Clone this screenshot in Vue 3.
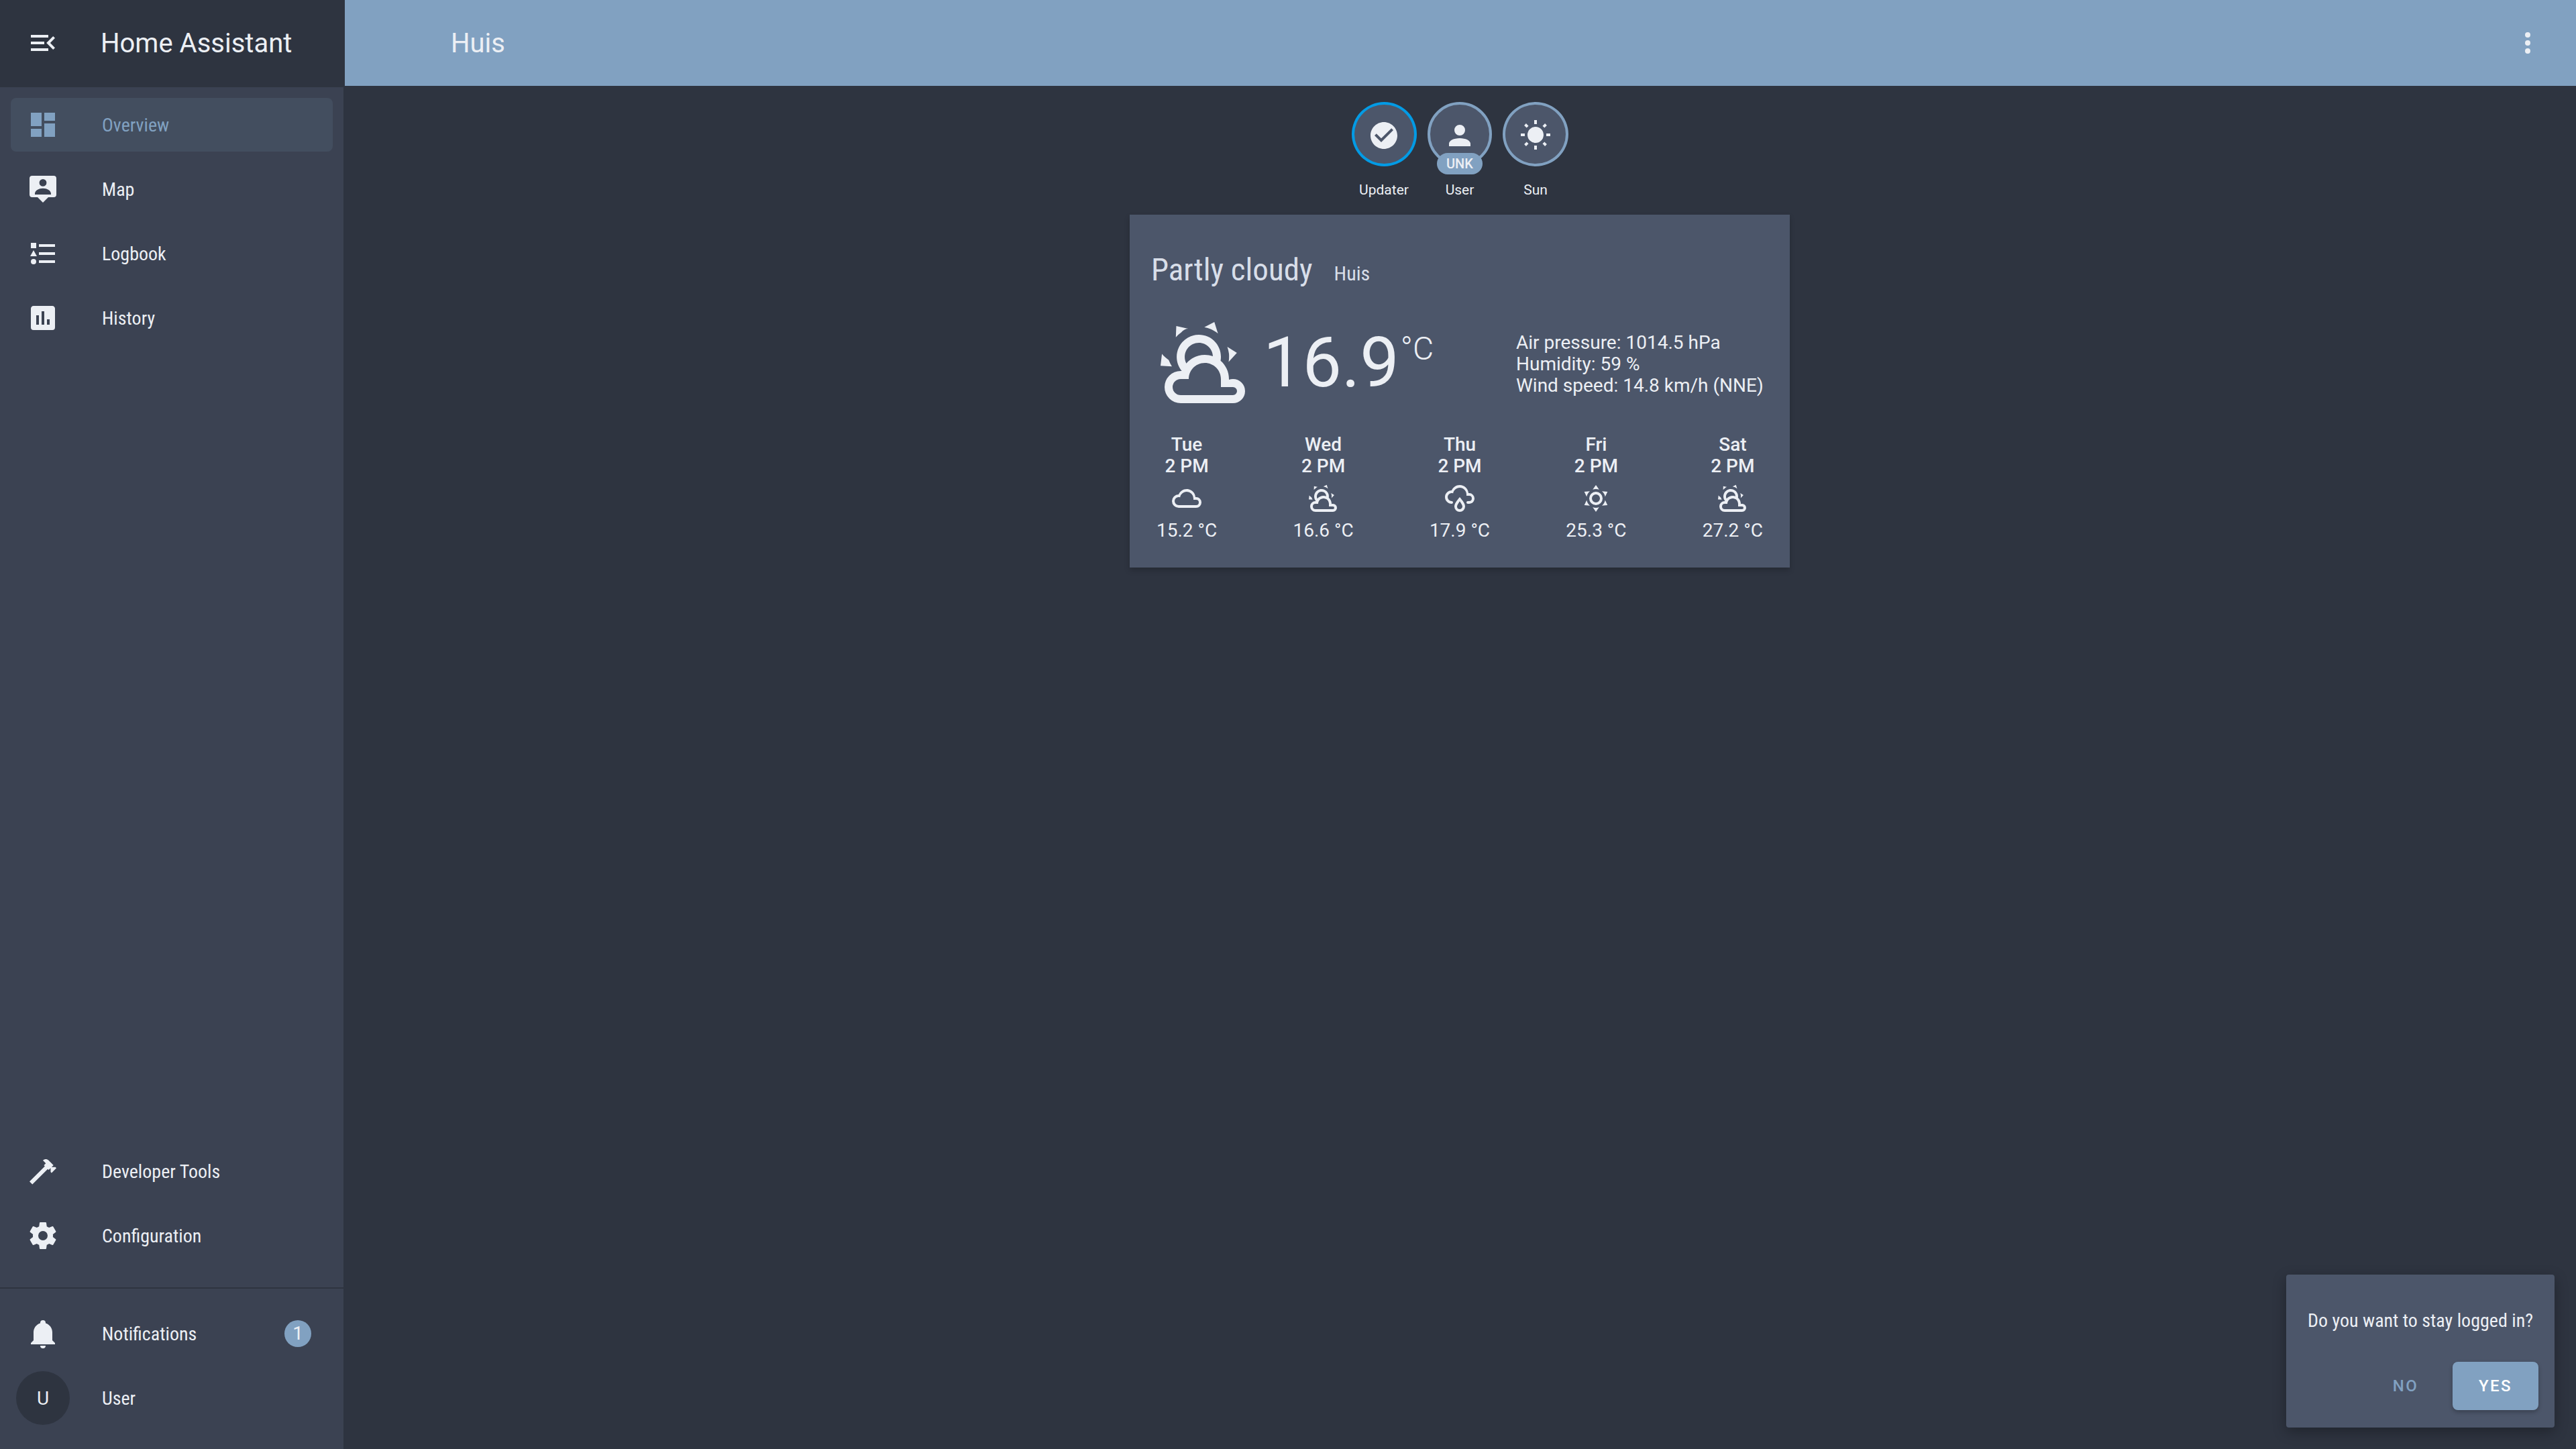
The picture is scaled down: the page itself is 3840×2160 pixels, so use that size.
<script setup>
const topNav = [
  { label: 'Overview', icon: 'M13,3V9H21V3M13,21H21V11H13M3,21H11V15H3M3,13H11V3H3V13Z', active: true },
  { label: 'Map', icon: 'M4,2H20A2,2 0 0,1 22,4V16A2,2 0 0,1 20,18H16L12,22L8,18H4A2,2 0 0,1 2,16V4A2,2 0 0,1 4,2M12,4.5A2.7,2.7 0 0,0 9.3,7.2A2.7,2.7 0 0,0 12,9.9A2.7,2.7 0 0,0 14.7,7.2A2.7,2.7 0 0,0 12,4.5M18,15.4C18,13 15,11.4 12,11.4C9,11.4 6,13 6,15.4V16H18Z' },
  { label: 'Logbook', icon: 'M5,9.5L7.5,14H2.5L5,9.5M3,4H7V8H3V4M5,20A2,2 0 0,0 7,18A2,2 0 0,0 5,16A2,2 0 0,0 3,18A2,2 0 0,0 5,20M9,5V7H21V5H9M9,19H21V17H9V19M9,13H21V11H9V13Z' },
  { label: 'History', icon: 'M19,3H5C3.89,3 3,3.89 3,5V19A2,2 0 0,0 5,21H19A2,2 0 0,0 21,19V5C21,3.89 20.1,3 19,3M9,17H7V10H9V17M13,17H11V7H13V17M17,17H15V13H17V17Z' }
]
const toolNav = [
  { label: 'Developer Tools', icon: 'M2 19.63L13.43 8.2L12.72 7.5L14.14 6.07L12 3.89C13.2 2.7 15.09 2.7 16.27 3.89L19.87 7.5L18.45 8.91H21.29L22 9.62L18.45 13.21L17.74 12.5V9.62L16.27 11.04L15.56 10.33L4.13 21.76L2 19.63Z' },
  { label: 'Configuration', icon: 'M12,15.5A3.5,3.5 0 0,1 8.5,12A3.5,3.5 0 0,1 12,8.5A3.5,3.5 0 0,1 15.5,12A3.5,3.5 0 0,1 12,15.5M19.43,12.97C19.47,12.65 19.5,12.33 19.5,12C19.5,11.67 19.47,11.34 19.43,11L21.54,9.37C21.73,9.22 21.78,8.95 21.66,8.73L19.66,5.27C19.54,5.05 19.27,4.96 19.05,5.05L16.56,6.05C16.04,5.66 15.5,5.32 14.87,5.07L14.5,2.42C14.46,2.18 14.25,2 14,2H10C9.75,2 9.54,2.18 9.5,2.42L9.13,5.07C8.5,5.32 7.96,5.66 7.44,6.05L4.95,5.05C4.73,4.96 4.46,5.05 4.34,5.27L2.34,8.73C2.21,8.95 2.27,9.22 2.46,9.37L4.57,11C4.53,11.34 4.5,11.67 4.5,12C4.5,12.33 4.53,12.65 4.57,12.97L2.46,14.63C2.27,14.78 2.21,15.05 2.34,15.27L4.34,18.73C4.46,18.95 4.73,19.03 4.95,18.95L7.44,17.94C7.96,18.34 8.5,18.68 9.13,18.93L9.5,21.58C9.54,21.82 9.75,22 10,22H14C14.25,22 14.46,21.82 14.5,21.58L14.87,18.93C15.5,18.67 16.04,18.34 16.56,17.94L19.05,18.95C19.27,19.03 19.54,18.95 19.66,18.73L21.66,15.27C21.78,15.05 21.73,14.78 21.54,14.63L19.43,12.97Z' }
]
const bell = 'M21,19V20H3V19L5,17V11C5,7.9 7.03,5.17 10,4.29C10,4.19 10,4.1 10,4A2,2 0 0,1 12,2A2,2 0 0,1 14,4C14,4.1 14,4.19 14,4.29C16.97,5.17 19,7.9 19,11V17L21,19M14,21A2,2 0 0,1 12,23A2,2 0 0,1 10,21'
const menuOpen = 'M21,15.61L19.59,17L14.58,12L19.59,7L21,8.39L17.44,12L21,15.61M3,6H16V8H3V6M3,13V11H13V13H3M3,18V16H16V18H3Z'
const dots = 'M12,16A2,2 0 0,1 14,18A2,2 0 0,1 12,20A2,2 0 0,1 10,18A2,2 0 0,1 12,16M12,10A2,2 0 0,1 14,12A2,2 0 0,1 12,14A2,2 0 0,1 10,12A2,2 0 0,1 12,10M12,4A2,2 0 0,1 14,6A2,2 0 0,1 12,8A2,2 0 0,1 10,6A2,2 0 0,1 12,4Z'

const partly = 'M12.74,5.47C15.1,6.5 16.35,9.03 15.92,11.46C17.19,12.56 18,14.19 18,16V16.17C18.31,16.06 18.65,16 19,16A3,3 0 0,1 22,19A3,3 0 0,1 19,22H6A4,4 0 0,1 2,18A4,4 0 0,1 6,14H6.27C5,12.45 4.6,10.24 5.5,8.26C6.72,5.5 9.97,4.24 12.74,5.47M11.93,7.3C10.16,6.5 8.09,7.31 7.31,9.07C6.85,10.09 6.93,11.22 7.41,12.13C8.5,10.83 10.16,10 12,10C12.7,10 13.38,10.12 14,10.34C13.94,9.06 13.18,7.86 11.93,7.3M13.55,3.64C13,3.4 12.45,3.23 11.88,3.12L14.37,1.82L15.27,4.71C14.76,4.29 14.19,3.93 13.55,3.64M6.09,4.44C5.6,4.79 5.17,5.19 4.8,5.63L4.91,2.82L7.87,3.5C7.25,3.5 6.65,3.81 6.09,4.44M18,9.71C17.91,9.12 17.78,8.55 17.59,8L19.97,9.5L17.92,11.73C18.03,11.08 18.05,10.4 18,9.71M3.04,11.3C3.24,11.85 3.5,12.38 3.83,12.87L1,12.7L1.35,9.74C1.77,10.28 2.4,10.8 3.04,11.3M19,18H16V16C16,13.79 14.21,12 12,12C9.79,12 8,13.79 8,16H6A2,2 0 0,0 4,18A2,2 0 0,0 6,20H19A1,1 0 0,0 20,19A1,1 0 0,0 19,18Z'
const cloudy = 'M6,19A5,5 0 0,1 1,14A5,5 0 0,1 6,9C7,6.65 9.3,5 12,5C15.43,5 18.24,7.66 18.5,11.03L19,11A4,4 0 0,1 23,15A4,4 0 0,1 19,19H6M19,13H17V12A5,5 0 0,0 12,7C9.5,7 7.45,8.82 7.06,11.19C6.73,11.07 6.37,11 6,11A3,3 0 0,0 3,14A3,3 0 0,0 6,17H19A2,2 0 0,0 21,15A2,2 0 0,0 19,13Z'
const rainy = 'M6,14.03A1,1 0 0,1 7,15.03C7,15.58 6.55,16.03 6,16.03C3.24,16.03 1,13.79 1,11.03C1,8.27 3.24,6.03 6,6.03C7,3.68 9.3,2.03 12,2.03C15.43,2.03 18.24,4.69 18.5,8.06L19,8.03A4,4 0 0,1 23,12.03C23,14.23 21.21,16.03 19,16.03H18C17.45,16.03 17,15.58 17,15.03C17,14.47 17.45,14.03 18,14.03H19A2,2 0 0,0 21,12.03A2,2 0 0,0 19,10.03H17V9.03C17,6.27 14.76,4.03 12,4.03C9.5,4.03 7.45,5.86 7.06,8.21C6.73,8.09 6.37,8.03 6,8.03A3,3 0 0,0 3,11.03A3,3 0 0,0 6,14.03M12,14.15C12.18,14.39 12.37,14.66 12.56,14.94C13,15.56 14,17.03 14,18C14,19.11 13.1,20 12,20A2,2 0 0,1 10,18C10,17.03 11,15.56 11.44,14.94C11.63,14.66 11.82,14.39 12,14.15M12,11.03L11.5,11.59C11.5,11.59 10.65,12.55 9.79,13.81C8.93,15.06 8,16.56 8,18A4,4 0 0,0 12,22A4,4 0 0,0 16,18C16,16.56 15.07,15.06 14.21,13.81C13.35,12.55 12.5,11.59 12.5,11.59'
const sunny = 'M12,7A5,5 0 0,1 17,12A5,5 0 0,1 12,17A5,5 0 0,1 7,12A5,5 0 0,1 12,7M12,9A3,3 0 0,0 9,12A3,3 0 0,0 12,15A3,3 0 0,0 15,12A3,3 0 0,0 12,9M12,2L14.39,5.42C13.65,5.15 12.84,5 12,5C11.16,5 10.35,5.15 9.61,5.42L12,2M3.34,7L7.5,6.65C6.9,7.16 6.36,7.78 5.94,8.5C5.5,9.24 5.25,10 5.11,10.79L3.34,7M3.36,17L5.12,13.23C5.26,14 5.53,14.78 5.95,15.5C6.37,16.24 6.91,16.86 7.5,17.37L3.36,17M20.65,7L18.88,10.79C18.74,10 18.47,9.23 18.05,8.5C17.63,7.78 17.1,7.15 16.5,6.64L20.65,7M20.64,17L16.5,17.36C17.09,16.85 17.62,16.22 18.04,15.5C18.46,14.77 18.73,14 18.87,13.21L20.64,17M12,22L9.59,18.56C10.33,18.83 11.14,19 12,19C12.82,19 13.63,18.83 14.37,18.56L12,22Z'

const badges = [
  { label: 'Updater', on: true, width: 97, icon: 'M12 2C6.5 2 2 6.5 2 12S6.5 22 12 22 22 17.5 22 12 17.5 2 12 2M10 17L5 12L6.41 10.59L10 14.17L17.59 6.58L19 8L10 17Z' },
  { label: 'User', tag: 'UNK', width: 96, icon: 'M12,4A4,4 0 0,1 16,8A4,4 0 0,1 12,12A4,4 0 0,1 8,8A4,4 0 0,1 12,4M12,14C16.42,14 20,15.79 20,18V20H4V18C4,15.79 7.58,14 12,14Z' },
  { label: 'Sun', width: 98, icon: 'M3.55,18.54L4.96,19.95L6.76,18.16L5.34,16.74M11,22.45C11.32,22.45 13,22.45 13,22.45V19.5H11M12,5.5A6,6 0 0,0 6,11.5A6,6 0 0,0 12,17.5A6,6 0 0,0 18,11.5C18,8.18 15.31,5.5 12,5.5M20,12.5H23V10.5H20M17.24,18.16L19.04,19.95L20.45,18.54L18.66,16.74M20.45,4.46L19.04,3.05L17.24,4.84L18.66,6.26M13,0.55H11V3.5H13M4,10.5H1V12.5H4M6.76,4.84L4.96,3.05L3.55,4.46L5.34,6.26L6.76,4.84Z' }
]
const forecast = [
  { day: 'Tue', icon: cloudy, temp: '15.2 °C' },
  { day: 'Wed', icon: partly, temp: '16.6 °C' },
  { day: 'Thu', icon: rainy, temp: '17.9 °C' },
  { day: 'Fri', icon: sunny, temp: '25.3 °C' },
  { day: 'Sat', icon: partly, temp: '27.2 °C' }
]
</script>

<template>
  <div class="app">
    <aside class="sidebar">
      <div class="brand">
        <svg class="icon" viewBox="0 0 24 24"><path :d="menuOpen" /></svg>
        <span class="brand-title">Home Assistant</span>
      </div>
      <nav class="nav top">
        <a v-for="n in topNav" :key="n.label" class="item" :class="{ active: n.active }">
          <svg class="icon" viewBox="0 0 24 24"><path :d="n.icon" fill-rule="evenodd" /></svg>
          <span class="item-label">{{ n.label }}</span>
        </a>
      </nav>
      <nav class="nav tools">
        <a v-for="n in toolNav" :key="n.label" class="item">
          <svg class="icon" viewBox="0 0 24 24"><path :d="n.icon" /></svg>
          <span class="item-label">{{ n.label }}</span>
        </a>
      </nav>
      <div class="divider"></div>
      <nav class="nav bottom">
        <a class="item">
          <svg class="icon" viewBox="0 0 24 24"><path :d="bell" /></svg>
          <span class="item-label">Notifications</span>
          <span class="count">1</span>
        </a>
        <a class="item user">
          <span class="avatar">U</span>
          <span class="item-label">User</span>
        </a>
      </nav>
    </aside>

    <main class="main">
      <header class="topbar">
        <span class="view-title">Huis</span>
        <svg class="icon" viewBox="0 0 24 24"><path :d="dots" /></svg>
      </header>
      <div class="content">
        <div class="badges">
          <div v-for="b in badges" :key="b.label" class="badge">
            <div class="ring" :class="{ on: b.on }" :style="{ width: b.width + 'px' }">
              <svg class="icon" viewBox="0 0 24 24"><path :d="b.icon" /></svg>
              <span v-if="b.tag" class="tag">{{ b.tag }}</span>
            </div>
            <span class="badge-label">{{ b.label }}</span>
          </div>
        </div>
        <section class="card">
          <div class="card-head">
            <span class="state">Partly cloudy</span>
            <span class="place">Huis</span>
          </div>
          <div class="now">
            <svg class="now-icon" viewBox="0 0 24 24"><path :d="partly" /></svg>
            <div class="temp">16.9<span class="unit">°C</span></div>
            <div class="attrs">
              <div>Air pressure: 1014.5 hPa</div>
              <div>Humidity: 59 %</div>
              <div>Wind speed: 14.8 km/h (NNE)</div>
            </div>
          </div>
          <div class="forecast">
            <div v-for="f in forecast" :key="f.day" class="fc">
              <div class="fc-day">{{ f.day }}<br />2 PM</div>
              <svg class="icon" viewBox="0 0 24 24"><path :d="f.icon" /></svg>
              <div class="fc-temp">{{ f.temp }}</div>
            </div>
          </div>
        </section>
      </div>
    </main>

    <div class="toast">
      <div class="toast-text">Do you want to stay logged in?</div>
      <div class="toast-actions">
        <button class="btn">NO</button>
        <button class="btn primary">YES</button>
      </div>
    </div>
  </div>
</template>

<style>
html, body { margin: 0; background: #2e3440; }
</style>

<style scoped>
.app {
  position: relative;
  display: flex;
  width: 3840px;
  height: 2160px;
  overflow: hidden;
  background: #2e3440;
  color: #eceff4;
  font-family: Roboto, "Liberation Sans", sans-serif;
  font-size: 28px;
}
.icon { width: 48px; height: 48px; flex: none; fill: #eceff4; display: block; }

.sidebar {
  width: 512px;
  border-right: 2px solid #2e3440;
  background: #3b4252;
  display: flex;
  flex-direction: column;
  flex: none;
}
.brand {
  height: 130px;
  flex: none;
  box-sizing: border-box;
  background: #2e3440;
  display: flex;
  align-items: center;
  padding: 0 40px 2px;
}
.brand-title { margin-left: 62px; font-size: 40px; }
.nav { display: flex; flex-direction: column; gap: 16px; }
.top { padding-top: 16px; flex: 1; }
.tools { padding-bottom: 37px; }
.divider { height: 2px; background: #2e3440; flex: none; }
.bottom { padding: 27px 0 36px; }
.item {
  height: 80px;
  margin: 0 16px;
  padding: 0 24px;
  border-radius: 8px;
  display: flex;
  align-items: center;
  box-sizing: border-box;
}
.item-label { margin-left: 64px; font-stretch: 75%; font-weight: 400; flex: 1; }
.item.active { background: rgba(129, 161, 193, 0.12); }
.item.active .icon { fill: #81a1c1; }
.item.active .item-label { color: #81a1c1; }
.user { padding-left: 8px; }
.user .item-label { margin-left: 48px; }
.avatar {
  width: 80px; height: 80px; border-radius: 50%;
  background: #2e3440;
  display: flex; align-items: center; justify-content: center;
  flex: none;
}
.count {
  width: 40px; height: 40px; border-radius: 50%;
  background: #81a1c1; color: #eceff4;
  font-size: 28px; line-height: 40px; text-align: center;
  margin-right: 8px;
}

.main { flex: 1; display: flex; flex-direction: column; min-width: 0; }
.topbar {
  height: 128px;
  flex: none;
  background: #81a1c1;
  display: flex;
  align-items: center;
  justify-content: space-between;
  padding: 0 48px 0 158px;
}
.view-title { font-size: 40px; }
.content { display: flex; flex-direction: column; align-items: center; padding: 24px 2px 0 0; }
.badges { display: flex; }
.badge { width: 113px; display: flex; flex-direction: column; align-items: center; }
.ring {
  position: relative;
  height: 96px;
  box-sizing: border-box;
  border: 4px solid #81a1c1;
  border-radius: 50%;
  background: #4c566a;
  display: flex; align-items: center; justify-content: center;
  padding-top: 3px;
}
.ring.on { border-color: #039be5; }
.tag {
  position: absolute;
  left: 50%;
  top: 72px;
  transform: translateX(-50%);
  width: 68px;
  height: 32px;
  line-height: 32px;
  text-align: center;
  border-radius: 16px;
  background: #81a1c1;
  font-size: 20px;
  font-weight: 500;
}
.badge-label { margin-top: 20px; font-size: 21px; line-height: 30px; }

.card {
  width: 984px;
  height: 526px;
  margin-top: 22px;
  box-sizing: border-box;
  background: #4c566a;
  box-shadow: 0 4px 8px rgba(0, 0, 0, 0.2);
  padding: 46px 32px 0;
}
.card-head { display: flex; align-items: baseline; height: 72px; line-height: 72px; }
.state { font-size: 47px; font-weight: 400; font-stretch: 75%; color: #d8dee9; }
.place { margin-left: 32px; font-size: 30px; font-stretch: 75%; color: #d8dee9; }
.now { display: flex; align-items: center; margin-top: 31px; height: 144px; margin-left: -24px; }
.now-icon { width: 144px; height: 144px; fill: #eceff4; flex: none; margin-left: 32px; }
.temp { margin-left: 15px; font-size: 104px; font-weight: 400; line-height: 104px; flex: none; width: 377px; display: flex; }
.unit { font-size: 48px; line-height: 62px; margin-left: 2px; font-weight: 300; }
.attrs { line-height: 32px; white-space: nowrap; padding-top: 4px; }
.forecast { display: flex; justify-content: space-between; margin: 34px 8px 0; }
.fc { display: flex; flex-direction: column; align-items: center; line-height: 32px; }
.fc-day { font-weight: 500; text-align: center; }
.fc .icon { margin-top: 8px; }
.fc-temp { margin-top: 8px; white-space: nowrap; }

.toast {
  position: absolute;
  right: 32px;
  bottom: 32px;
  width: 400px;
  height: 228px;
  box-sizing: border-box;
  background: #4c566a;
  border-radius: 4px;
  box-shadow: 0 6px 20px rgba(0, 0, 0, 0.3);
  padding: 49px 24px 26px 32px;
  display: flex;
  flex-direction: column;
  justify-content: space-between;
}
.toast-text { font-stretch: 75%; white-space: nowrap; line-height: 40px; }
.toast-actions { display: flex; justify-content: flex-end; align-items: center; }
.btn {
  font: 500 24px Roboto, sans-serif;
  letter-spacing: 2.5px;
  height: 72px;
  width: 128px;
  border: 0;
  border-radius: 8px;
  background: transparent;
  color: #81a1c1;
  padding: 0;
  margin-left: 8px;
}
.btn:first-child { transform: translateX(2px); }
.btn.primary { background: #81a1c1; color: #fff; box-shadow: 0 3px 6px rgba(0,0,0,0.25); }
</style>
